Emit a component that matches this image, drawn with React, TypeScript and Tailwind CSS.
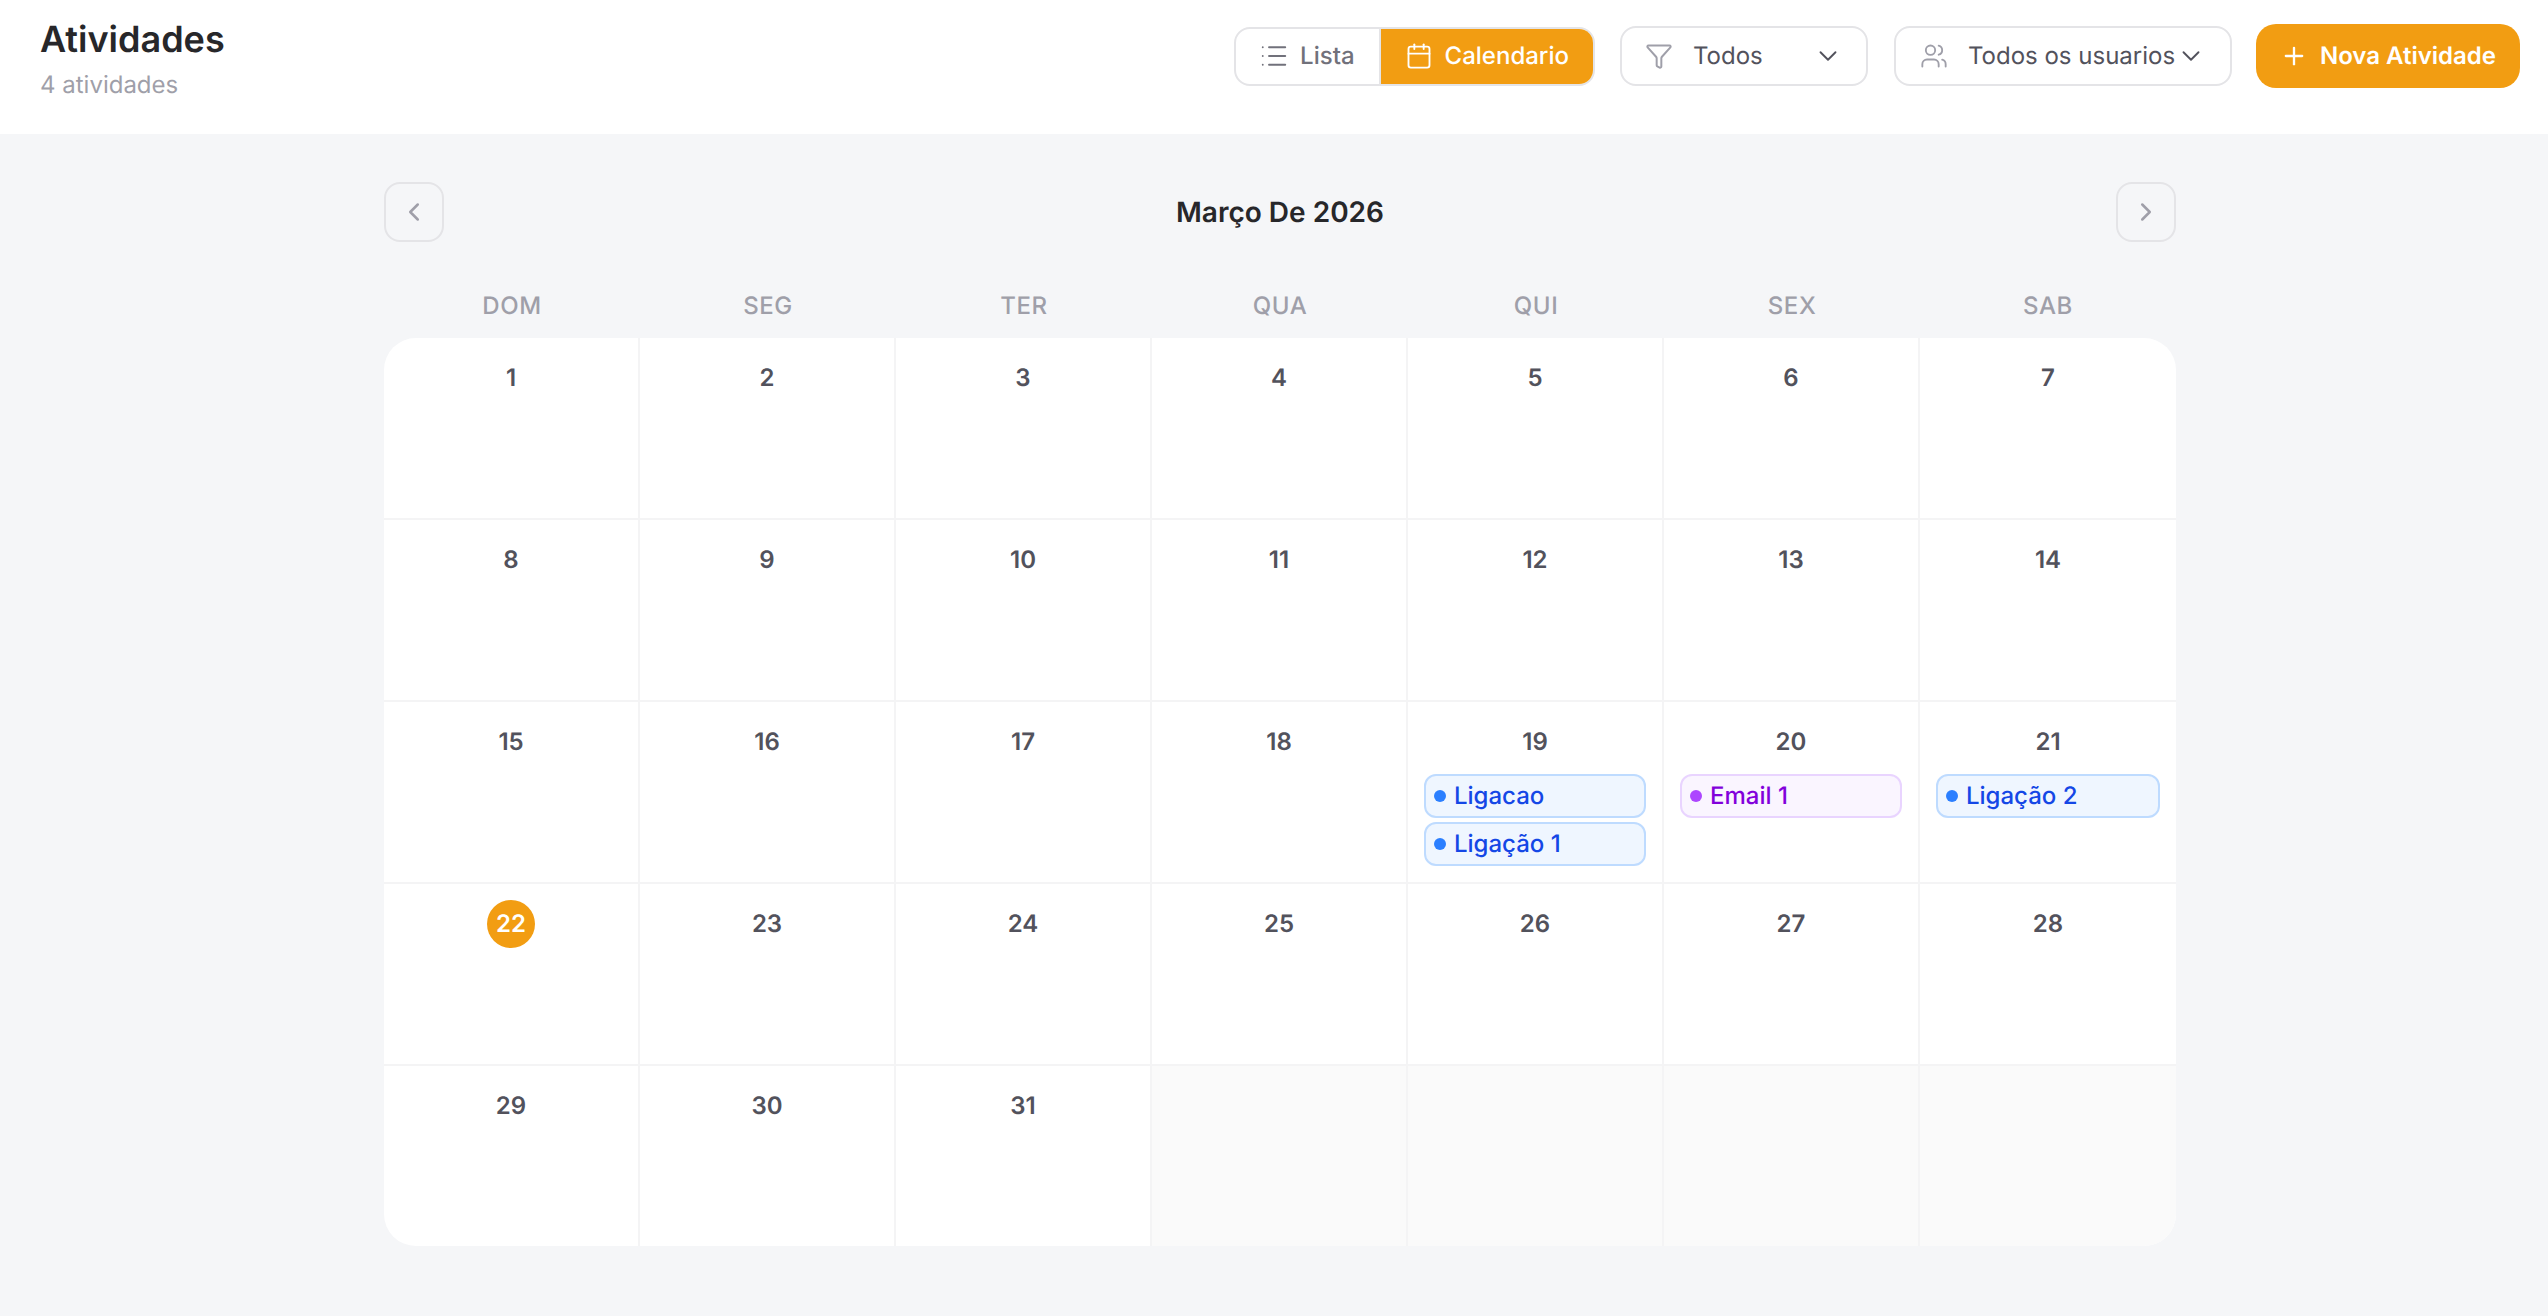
import { Calendar, ChevronDown, ChevronLeft, ChevronRight, Funnel, List, Plus, Users } from "lucide-react";

type Ev = { label: string; kind: "blue" | "purple" };

const events: Record<number, Ev[]> = {
  19: [
    { label: "Ligacao", kind: "blue" },
    { label: "Ligação 1", kind: "blue" },
  ],
  20: [{ label: "Email 1", kind: "purple" }],
  21: [{ label: "Ligação 2", kind: "blue" }],
};

const weekdays = ["DOM", "SEG", "TER", "QUA", "QUI", "SEX", "SAB"];
const cells: (number | null)[] = [...Array.from({ length: 31 }, (_, i) => i + 1), null, null, null, null];

function Chip({ ev }: { ev: Ev }) {
  const blue = ev.kind === "blue";
  return (
    <div
      className={
        blue
          ? "flex h-[44px] items-center gap-2 rounded-[12px] border-2 border-blue-200 bg-blue-50 pl-2 text-[24px] font-medium text-blue-700"
          : "flex h-[44px] items-center gap-2 rounded-[12px] border-2 border-purple-200 bg-purple-50 pl-2 text-[24px] font-medium text-purple-700"
      }
    >
      <span className={blue ? "size-3 shrink-0 rounded-full bg-blue-500" : "size-3 shrink-0 rounded-full bg-purple-500"} />
      <span>{ev.label}</span>
    </div>
  );
}

export default function App() {
  return (
    <div className="h-screen w-screen overflow-hidden bg-[#f5f6f8]">
      <div className="w-[2560px] font-['Inter',sans-serif] [text-rendering:geometricPrecision]">
        <header className="flex h-[134px] items-start justify-between bg-white px-10 pt-[11px]">
          <div>
            <h1 className="text-[36px] leading-[56px] font-semibold text-zinc-800">Atividades</h1>
            <p className="mt-[2px] text-[24px] leading-[32px] text-zinc-400">4 atividades</p>
          </div>
          <div className="mt-[13px] flex items-center">
            <div className="mr-[25px] flex h-[59px] overflow-hidden rounded-[16px] border-2 border-zinc-200 bg-white text-[24px] font-medium">
              <div className="flex items-center gap-[11px] border-r-2 border-zinc-200 pr-6 pl-[23px] text-zinc-500">
                <List size={30} strokeWidth={1.5} />
                <span>Lista</span>
              </div>
              <div className="flex items-center gap-3 bg-[#f29d12] px-6 text-white">
                <Calendar size={28} strokeWidth={1.6} />
                <span>Calendario</span>
              </div>
            </div>
            <div className="mr-[26px] flex h-[60px] w-[248px] items-center rounded-[16px] border-2 border-zinc-200 bg-white pr-[23px] pl-[23px] text-[24px] font-normal text-zinc-600">
              <Funnel size={28} strokeWidth={1.7} className="shrink-0 text-zinc-400" />
              <span className="ml-5 flex-1">Todos</span>
              <ChevronDown size={30} strokeWidth={1.5} className="shrink-0" />
            </div>
            <div className="mr-6 flex h-[60px] w-[338px] items-center rounded-[16px] border-2 border-zinc-200 bg-white pr-6 pl-6 text-[24px] font-normal text-zinc-600">
              <Users size={28} strokeWidth={1.6} className="shrink-0 text-zinc-400" />
              <span className="ml-5 flex-1 whitespace-nowrap">Todos os usuarios</span>
              <ChevronDown size={30} strokeWidth={1.5} className="shrink-0" />
            </div>
            <div className="flex h-[64px] items-center gap-3 rounded-[20px] bg-[#f29d12] px-6 text-[24px] font-semibold text-white">
              <Plus size={28} strokeWidth={2} />
              <span>Nova Atividade</span>
            </div>
          </div>
        </header>

        <main className="mx-auto w-[1792px] pt-12">
          <div className="mb-12 flex h-[60px] items-center justify-between">
            <button className="flex size-[60px] items-center justify-center rounded-[16px] border-2 border-zinc-200 text-zinc-400">
              <ChevronLeft size={30} strokeWidth={2} />
            </button>
            <h2 className="text-[28px] font-semibold text-zinc-800">Março De 2026</h2>
            <button className="flex size-[60px] items-center justify-center rounded-[16px] border-2 border-zinc-200 text-zinc-400">
              <ChevronRight size={30} strokeWidth={2} />
            </button>
          </div>

          <div className="mb-4 grid grid-cols-7">
            {weekdays.map((d) => (
              <div key={d} className="text-center text-[24px] leading-[32px] font-medium tracking-[0.6px] text-zinc-400">
                {d}
              </div>
            ))}
          </div>

          <div className="grid grid-cols-7 overflow-hidden rounded-[32px] bg-white">
            {cells.map((day, i) => {
              const lastCol = i % 7 === 6;
              const lastRow = i >= 28;
              return (
                <div
                  key={i}
                  className={[
                    lastRow ? "h-[180px]" : "h-[182px] border-b-2",
                    lastCol ? "" : "border-r-2",
                    "border-zinc-100 p-4",
                    day === null ? "bg-[#fafafa]" : "",
                  ].join(" ")}
                >
                  {day !== null && (
                    <>
                      <div className="flex h-12 items-center justify-center">
                        <span
                          className={
                            day === 22
                              ? "flex size-12 items-center justify-center rounded-full bg-[#f29d12] text-[24px] font-semibold text-white"
                              : "text-[24px] font-semibold text-zinc-600"
                          }
                        >
                          {day}
                        </span>
                      </div>
                      {events[day] && (
                        <div className="mt-2 flex flex-col gap-1">
                          {events[day].map((ev) => (
                            <Chip key={ev.label} ev={ev} />
                          ))}
                        </div>
                      )}
                    </>
                  )}
                </div>
              );
            })}
          </div>
        </main>
      </div>
    </div>
  );
}
